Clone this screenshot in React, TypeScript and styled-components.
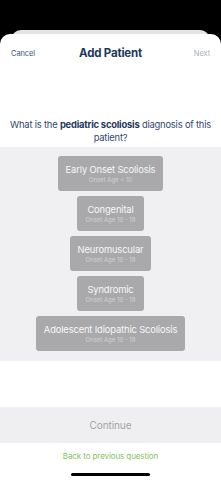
import React from "react";
import styled, { createGlobalStyle } from "styled-components";

interface Diagnosis {
  title: string;
  onset: string;
}

const diagnoses: Diagnosis[] = [
  { title: "Early Onset Scoliosis", onset: "Onset Age < 10" },
  { title: "Congenital", onset: "Onset Age 10 - 18" },
  { title: "Neuromuscular", onset: "Onset Age 10 - 18" },
  { title: "Syndromic", onset: "Onset Age 10 - 18" },
  { title: "Adolescent Idiopathic Scoliosis", onset: "Onset Age 10 - 18" },
];

const App: React.FC = () => {
  return (
    <Screen>
      <GlobalStyle />
      <BackCard />
      <Sheet>
        <Header>
          <HeaderLink>Cancel</HeaderLink>
          <Title>Add Patient</Title>
          <HeaderLink $disabled>Next</HeaderLink>
        </Header>
        <Question>
          What is the <strong>pediatric scoliosis</strong> diagnosis of this
          patient?
        </Question>
        <Options>
          {diagnoses.map(d => (
            <Option key={d.title}>
              <OptionTitle>{d.title}</OptionTitle>
              <OptionSub>{d.onset}</OptionSub>
            </Option>
          ))}
        </Options>
        <Spacer />
        <ContinueBar>Continue</ContinueBar>
        <BackLink>Back to previous question</BackLink>
        <HomeIndicator />
      </Sheet>
    </Screen>
  );
};

const GlobalStyle = createGlobalStyle`
  html, body {
    margin: 0;
    padding: 0;
    background: #000;
  }
  body {
    font-family: Inter, "Liberation Sans", Arial, sans-serif;
    -webkit-font-smoothing: antialiased;
  }
`;

const Screen = styled.div`
  width: 221px;
  height: 480px;
  background: #000;
  display: flex;
  flex-direction: column;
  padding-top: 30px;
  box-sizing: border-box;
  overflow: hidden;
`;

const BackCard = styled.div`
  height: 14px;
  margin: 0 11px;
  border-radius: 10px 10px 0 0;
  background: #e4e4e7;
`;

const Sheet = styled.div`
  position: relative;
  margin-top: -10px;
  flex: 1;
  display: flex;
  flex-direction: column;
  background: #fff;
  border-radius: 10px 10px 0 0;
`;

const Header = styled.div`
  height: 38px;
  display: flex;
  align-items: center;
  justify-content: space-between;
  padding: 0 11px;
`;

const HeaderLink = styled.span<{ $disabled?: boolean }>`
  font-size: 7.5px;
  letter-spacing: -0.1px;
  color: ${p => (p.$disabled ? "#a9b3c1" : "#3b5478")};
  width: 30px;
  text-align: ${p => (p.$disabled ? "right" : "left")};
`;

const Title = styled.div`
  font-size: 11.5px;
  font-weight: 700;
  color: #1c375c;
  letter-spacing: -0.2px;
`;

const Question = styled.div`
  margin-top: 46px;
  padding: 0 9px;
  text-align: center;
  font-size: 9.4px;
  line-height: 13px;
  letter-spacing: -0.2px;
  color: #304a70;

  strong {
    font-weight: 700;
    color: #1c375c;
  }
`;

const Options = styled.div`
  margin-top: 3px;
  background: #f0f0f3;
  padding: 9px 0 10px;
  display: flex;
  flex-direction: column;
  align-items: center;
  gap: 5px;
`;

const Option = styled.div`
  background: #a9a9ab;
  border-radius: 3px;
  padding: 7px 8px;
  min-width: 51px;
  display: flex;
  flex-direction: column;
  align-items: center;
`;

const OptionTitle = styled.div`
  font-size: 9.4px;
  line-height: 13px;
  letter-spacing: -0.15px;
  color: #f7f7f7;
  white-space: nowrap;
`;

const OptionSub = styled.div`
  font-size: 6px;
  line-height: 8px;
  color: #d2d2d4;
  white-space: nowrap;
`;

const Spacer = styled.div`
  flex: 1;
`;

const ContinueBar = styled.div`
  height: 36px;
  background: #efeff2;
  display: flex;
  align-items: center;
  justify-content: center;
  font-size: 10px;
  letter-spacing: -0.1px;
  color: #a2a2a6;
`;

const BackLink = styled.div`
  margin-top: 8px;
  text-align: center;
  font-size: 8px;
  line-height: 10px;
  letter-spacing: -0.1px;
  color: #86c062;
`;

const HomeIndicator = styled.div`
  margin: 12px auto 4px;
  width: 79px;
  height: 3px;
  border-radius: 2px;
  background: #000;
`;

export default App;
